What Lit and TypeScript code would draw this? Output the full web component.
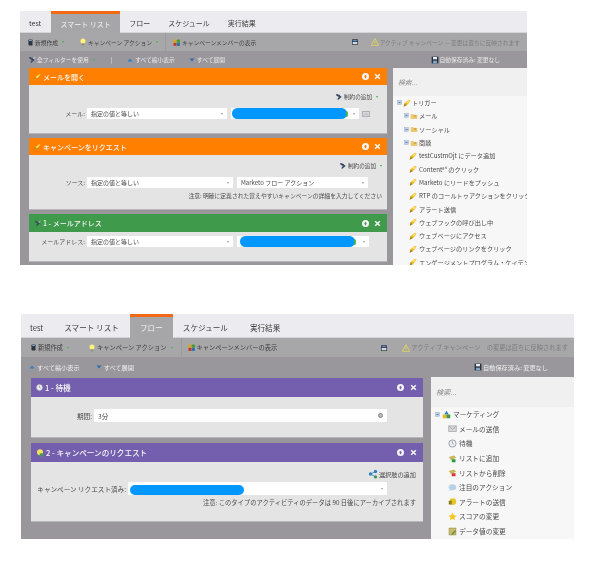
import { LitElement, html, css, svg } from "lit";
import { customElement } from "lit/decorators.js";

const I = (w: number, body: unknown) => html`<svg class="ic" width=${w} height=${w} viewBox="0 0 12 12">${body}</svg>`;
const icons: Record<string, (w?: number) => unknown> = {
  bolt: (w = 8) => I(w, svg`<path d="M1 11.5 L2.5 6.5 L8.5 1 L11.5 2.5 L6.5 8.5 Z" fill="#f5b81f"/><path d="M1 11.5 L2.5 6.5 L5.5 9.5 Z" fill="#9c8a2a"/><path d="M5 5 L8.5 2 L10.5 3 L7 6.5 Z" fill="#ffe27a"/>`),
  titleBolt: (w = 7) => I(w, svg`<path d="M1 11 L3 7 L9 2 L11 3 L6 8 Z" fill="#ffe45c"/><path d="M1 11 L3 7 L5 9 Z" fill="#6f8f2a"/>`),
  wrench: (w = 8) => I(w, svg`<path d="M2 1 L7 3 L10 6 L4 11 L4 8 L6 6 L2 4 Z" fill="#3d4a66"/><path d="M8 4 L11 2" stroke="#eee" stroke-width="1.2"/>`),
  bulb: (w = 8) => I(w, svg`<circle cx="6" cy="4.6" r="3.8" fill="#fff27a"/><rect x="4.4" y="8.4" width="3.2" height="2.6" fill="#8a8a70"/>`),
  doc: (w = 7) => I(w, svg`<rect x="2.5" y="1" width="7" height="10" rx="1" fill="#2e3540"/><rect x="3.5" y="1.5" width="5" height="2" fill="#7fa0c0"/>`),
  members: (w = 9) => I(w, svg`<circle cx="4" cy="4" r="2.5" fill="#d9a520"/><circle cx="8.5" cy="4" r="2.5" fill="#4d9a3d"/><rect x="2" y="6.5" width="4" height="4" fill="#c0392b"/><rect x="6.5" y="6.5" width="4" height="4" fill="#2d6fb0"/>`),
  up: (w = 6) => I(w, svg`<path d="M1 9 L6 3 L11 9 Z" fill="#2d82c4"/>`),
  down: (w = 6) => I(w, svg`<path d="M1 3 L11 3 L6 9 Z" fill="#2d6fb0"/>`),
  save: (w = 8) => I(w, svg`<rect x="1" y="1" width="10" height="10" fill="#26303c"/><rect x="3" y="1.5" width="6" height="3.5" fill="#e6edf5"/><rect x="3" y="7" width="6" height="4" fill="#7da3c9"/>`),
  cal: (w = 8) => I(w, svg`<rect x="1.5" y="2" width="9" height="8.5" rx="1" fill="#2e3540"/><rect x="2.5" y="3.2" width="7" height="1.6" fill="#5f9bd0"/><rect x="2.5" y="6" width="7" height="3.4" fill="#d5d8dc"/>`),
  warn: (w = 8) => I(w, svg`<path d="M6 1 L11.5 11 L.5 11 Z" fill="none" stroke="#e8d94f" stroke-width="1.2"/><rect x="5.4" y="4.5" width="1.2" height="3.6" fill="#e8d94f"/>`),
  toggle: (w = 5) => I(w, svg`<rect x="1.5" y="1.5" width="9" height="9" fill="#bcd0ea" stroke="#8aa0c0"/><rect x="3.5" y="5.2" width="5" height="1.6" fill="#44608a"/>`),
  folder: (w = 8) => I(w, svg`<path d="M1 3 L5 3 L6 4.5 L11 4.5 L11 10.5 L1 10.5 Z" fill="#eecb72"/><circle cx="7.5" cy="6" r="2" fill="#d2ab55"/>`),
  market: (w = 9) => I(w, svg`<path d="M6 1 L9 6 L3 6 Z" fill="#2f7fc1"/><rect x="1" y="6" width="5" height="5" fill="#e8b920"/><rect x="6" y="6" width="5" height="5" fill="#3f9a4b"/>`),
  mail: (w = 9) => I(w, svg`<rect x="1" y="2.5" width="10" height="7.5" fill="#d8d8da" stroke="#a5a5a8"/><path d="M1 3 L6 7 L11 3" fill="none" stroke="#9a9a9e"/>`),
  clock: (w = 9) => I(w, svg`<circle cx="6" cy="6" r="4.8" fill="#eef0f4" stroke="#9098a8" stroke-width="1.2"/><path d="M6 3 V6 L8 7" fill="none" stroke="#9098a8"/>`),
  addList: (w = 9) => I(w, svg`<path d="M1 4 L8 2 L11 5 L4 8 Z" fill="#c9b65a"/><rect x="5" y="7" width="5" height="4" fill="#2d9a35"/>`),
  delList: (w = 9) => I(w, svg`<path d="M1 4 L8 2 L11 5 L4 8 Z" fill="#c9b65a"/><rect x="5" y="7" width="5" height="4" fill="#d33"/>`),
  bubble: (w = 9) => I(w, svg`<ellipse cx="6" cy="5.5" rx="5" ry="4" fill="#b5d2e8"/><path d="M3 8 L2 11 L6 9 Z" fill="#b5d2e8"/>`),
  alert: (w = 9) => I(w, svg`<ellipse cx="6.5" cy="6" rx="4.5" ry="4.5" fill="#e2c62a"/><rect x="1" y="5" width="4" height="5" fill="#8f7f20"/>`),
  star: (w = 9) => I(w, svg`<path d="M6 .8 L7.6 4.4 L11.4 4.8 L8.5 7.3 L9.4 11 L6 9 L2.6 11 L3.5 7.3 L.6 4.8 L4.4 4.4 Z" fill="#f5c518"/>`),
  data: (w = 9) => I(w, svg`<rect x="1.5" y="1.5" width="9" height="9" fill="#cdbb6a" stroke="#9f9450"/><path d="M5 10 L10 5" stroke="#4d8a3d" stroke-width="1.5"/>`),
  waitT: (w = 7) => I(w, svg`<circle cx="6" cy="6" r="5" fill="#eee" stroke="#bbb"/><path d="M6 3 V6 L8 7" fill="none" stroke="#777"/>`),
  reqT: (w = 8) => I(w, svg`<circle cx="6" cy="5" r="4.5" fill="#f4e25a"/><rect x="5.5" y="6.5" width="5" height="5" fill="#3f9a4b"/>`),
  choice: (w = 10) => I(w, svg`<circle cx="3" cy="6" r="2" fill="#2d82c4"/><circle cx="9" cy="3" r="2" fill="#2d82c4"/><circle cx="9" cy="9.5" r="2" fill="#3f9a4b"/><path d="M3 6 L9 3 M3 6 L9 9.5" stroke="#2d82c4"/>`),
  picker: (w = 8) => I(w, svg`<rect x="1" y="2" width="10" height="8" fill="#d8d8da" stroke="#9a9a9e"/><path d="M3 8 L6 5 L9 8" fill="none" stroke="#8f9fb0"/>`),
  info: (w = 7) => I(w, svg`<circle cx="6" cy="6" r="6" fill="#f6f6f6"/><path d="M3.2 6 L6 3 L8.8 6 H7.2 V9 H4.8 V6 Z" fill="currentColor"/>`),
  close: (w = 7) => I(w, svg`<path d="M2 2 L10 10 M10 2 L2 10" stroke="#f6f6f6" stroke-width="2.6"/>`),
};

const tabs = ["スマート リスト", "フロー", "スケジュール", "実行結果"];
const tree1: [number, string, string][] = [
  [0, "bolt", "トリガー"], [1, "folder", "メール"], [1, "folder", "ソーシャル"], [1, "folder", "商談"],
  [2, "bolt", "testCustmOjt にデータ追加"], [2, "bolt", "Content⁸⁴ のクリック"], [2, "bolt", "Marketo にリードをプッシュ"],
  [2, "bolt", "RTP のコールトゥアクションをクリック"], [2, "bolt", "アラート送信"], [2, "bolt", "ウェブフックの呼び出し中"],
  [2, "bolt", "ウェブページにアクセス"], [2, "bolt", "ウェブページのリンクをクリック"], [2, "bolt", "エンゲージメントプログラム・ケイデンス"],
];
const tree2: [number, string, string][] = [
  [0, "market", "マーケティング"], [2, "mail", "メールの送信"], [2, "clock", "待機"], [2, "addList", "リストに追加"],
  [2, "delList", "リストから削除"], [2, "bubble", "注目のアクション"], [2, "alert", "アラートの送信"], [2, "star", "スコアの変更"], [2, "data", "データ値の変更"],
];

@customElement("app-root")
export class AppRoot extends LitElement {
  static styles = css`
    :host { display: block; width: 605px; height: 571px; background: #fff; overflow: hidden;
      font-family: "Noto Sans CJK JP", "Open Sans", sans-serif; color: #444; }
    .page { display: flex; flex-direction: column; padding: 11px 0 0 20px; }
    .screen { display: flex; flex-direction: column; overflow: hidden; background: #99979b; filter: blur(0.35px); }
    .s1 { width: 507px; height: 254px; }
    .s2 { width: 553px; height: 225px; margin: 49px 0 0 1px; }
    .ic { display: block; flex: none; }

    .tabs { display: flex; align-items: stretch; background: #ececf0; border-bottom: 1px solid #d4d4d8; box-sizing: border-box; }
    .s1 .tabs { height: 22px; font-size: 7px; }
    .s2 .tabs { height: 24px; font-size: 7.6px; }
    .tab { display: flex; align-items: center; justify-content: center; color: #3c3c3c; box-sizing: border-box; border-top: 3px solid transparent; padding-bottom: 1px; white-space: nowrap; }
    .tab.on { background: #a6a6a9; color: #f4f4f4; border-top-color: #f26a14; margin-bottom: -1px; }
    .s1 .tab { padding: 0 9px; }
    .s1 .tab.t0 { margin-right: 1px; }
    .s1 .tab.t1 { width: 69px; padding: 0; }
    .s2 .tab { padding: 0 8px; }
    .s2 .tab.t0 { padding: 0 13px 0 9px; }
    .s2 .tab.t1 { padding: 0 11px 0 8px; }
    .s2 .tab.t2 { width: 43px; padding: 0; }
    .s2 .tab.t3 { padding: 0 11px 0 10px; }
    .s2 .tab.t4 { padding: 0 11px; }

    .bar { display: flex; align-items: center; white-space: nowrap; color: #3e3e3e; }
    .s1 .bar.one { height: 18px; background: #a7a7aa; font-size: 5.75px; padding: 0 7px 0 7px; }
    .s2 .bar.one { height: 19px; background: #a7a7aa; font-size: 6.25px; padding: 0 6px 0 9px; }
    .s1 .bar.two { height: 17px; background: #99979b; color: #e8e8e8; font-size: 5.75px; padding: 0 10px 0 8px; }
    .s2 .bar.two { height: 20px; background: #99979b; color: #ededed; font-size: 6.2px; padding: 0 10px 0 8px; }
    .it { display: flex; align-items: center; gap: 1px; }
    .it.lg { gap: 2px; }
    .dot { width: 0; height: 0; border-left: 1.5px solid transparent; border-right: 1.5px solid transparent; border-top: 2.5px solid #39b54a; margin-left: 3px; }
    .sep { width: 1px; align-self: stretch; background: #9b9b9e; }
    .grow { flex: 1; }
    .s1 .g-act { margin-left: 15px; }
    .s1 .g-sep { margin: 0 6px 0 7px; }
    .s2 .g-act { margin-left: 19px; }
    .s2 .g-sep { margin: 0 5px 0 8px; }
    .s1 .g-warn { margin-left: 12px; }
    .s2 .g-warn { margin-left: 14px; }
    .gray-warn { color: #7c7c80; }
    .s1 .g-pipe { margin: 0 15px 0 16px; color: #e8e8e8; }
    .s1 .g-exp { margin-left: 14px; }
    .s2 .g-exp { margin-left: 16px; }
    .right-save1 { margin-right: 17px; }
    .right-save2 { margin-right: 16px; }

    .main { flex: 1; display: flex; min-height: 0; }
    .flow { flex: 1; display: flex; flex-direction: column; min-width: 0; }
    .s1 .flow { padding: 0 6px 0 9px; gap: 4px; }
    .s2 .flow { padding: 1px 8px 0 10px; gap: 5px; }
    .card { background: #e4e4e4; border-bottom: 1px solid #b8b8ba; flex: none; display: flex; flex-direction: column; }
    .head { display: flex; align-items: center; color: #f6f6f6; font-weight: 500; padding: 0 6px 0 5px; gap: 2px; flex: none; box-sizing: border-box; }
    .orange { background: #ff8000; color: #ff8000; }
    .green { background: #3f9a4b; color: #3f9a4b; }
    .purple { background: #735fae; color: #735fae; }
    .title { flex: 1; white-space: nowrap; color: #f6f6f6; }
    .ctl { display: flex; align-items: center; gap: 5px; }

    .s1 .head { height: 17px; font-size: 7px; }
    .s1 .c3 .head { height: 18px; }
    .s2 .head { height: 19px; font-size: 7.6px; }
    .s2 .ctl { gap: 6px; }
    .body { position: relative; display: flex; flex-direction: column; font-size: 6px; color: #4a4a4a; white-space: nowrap; box-sizing: border-box; }
    .add { display: flex; align-items: center; justify-content: flex-end; gap: 1px; font-size: 5.6px; height: 8px; }
    .row { display: flex; align-items: stretch; }
    .lab { display: flex; align-items: center; justify-content: flex-end; flex: none; padding-right: 2px; box-sizing: border-box; }
    .sel { background: #fff; display: flex; align-items: center; position: relative; box-sizing: border-box; padding-left: 4px; flex: none; }
    .sel .car { position: absolute; right: 4px; top: 50%; margin-top: -1px; width: 0; height: 0; border-left: 1.5px solid transparent; border-right: 1.5px solid transparent; border-top: 2px solid #999; }
    .pill { background: #0098ff; border-radius: 6px; height: 100%; }
    .sel.p { padding: 0 0 0 1px; }
    .note { font-size: 5.8px; text-align: right; }
    .greenbit { width: 2px; height: 6px; background: #45b649; border-radius: 0 3px 3px 0; margin-left: -1px; }
    .clear { position: absolute; right: 4px; top: 50%; margin-top: -2.5px; width: 5px; height: 5px; border: 1px solid #888; background: #bbb; border-radius: 50%; box-sizing: border-box; }

    .c1 .body { height: 48px; padding: 8px 9px 0 0; }
    .c1 .row { height: 11px; margin-top: 7px; }
    .c1 .lab, .c2 .lab, .c3 .lab { width: 58px; }
    .c1 .a { width: 140px; }
    .c1 .b { width: 128px; margin-left: 4px; padding-right: 11px; }
    .c1 .after { margin-left: 3px; align-self: center; }
    .c2 .body { height: 54px; padding: 7px 5px 0 0; }
    .c2 .row { height: 11px; margin-top: 7px; }
    .c2 .a { width: 146px; }
    .c2 .b { width: 131px; margin-left: 4px; }
    .c2 .note { margin-top: 3px; }
    .c3 .body { height: 29px; padding-top: 4px; }
    .c3 .row { height: 11px; }
    .c3 .a { width: 146px; }
    .c3 .b { width: 132px; margin-left: 4px; padding: 0 13px 0 3px; }
    .w1 .body { height: 40px; padding-top: 12px; font-size: 6.6px; }
    .w1 .row { height: 13px; }
    .w1 .lab { width: 63px; }
    .w1 .a { width: 293px; }
    .w2 .body { height: 59px; padding: 8px 7px 0 0; font-size: 6.6px; }
    .w2 .add { font-size: 6.2px; }
    .w2 .row { height: 13px; margin-top: 4px; }
    .w2 .lab { width: 97px; }
    .w2 .a { width: 259px; padding: 3px 0 0 2px; }
    .w2 .pill { width: 114px; height: 10px; }
    .w2 .note { margin-top: 3px; font-size: 6.3px; }

    .side { flex: none; background: #f7f7f7; display: flex; flex-direction: column; overflow: hidden; }
    .s1 .side { width: 134px; }
    .s2 .side { width: 143px; }
    .search { flex: none; background: #f0f0f1; color: #8a8a8a; font-style: italic; display: flex; align-items: center; padding-left: 5px; }
    .s1 .search { height: 28px; font-size: 6.8px; }
    .s2 .search { height: 30px; font-size: 7.2px; }
    .tree { white-space: nowrap; color: #4a4a4a; }
    .s1 .tree { font-size: 6.2px; }
    .s2 .tree { font-size: 6.7px; }
    .node { display: flex; align-items: center; gap: 1px; }
    .s1 .node { height: 13.3px; }
    .s2 .node { height: 14.6px; }
    .s1 .l0 { padding-left: 4px; } .s1 .l1 { padding-left: 11px; } .s1 .l2 { padding-left: 16px; }
    .s2 .l0 { padding-left: 4px; } .s2 .l2 { padding-left: 17px; }
    .s2 .node .ic { margin-right: 1px; }
    .s1 .l2 .ic { margin-right: 1px; }
  `;

  private head(color: string, icon: unknown, title: string) {
    return html`<div class="head ${color}">${icon}<span class="title">${title}</span>
      <span class="ctl">${icons.info()}${icons.close()}</span></div>`;
  }

  private tabsRow(active: number) {
    return html`<div class="tabs">${["test", ...tabs].map((t, i) =>
      html`<div class="tab t${i} ${i === active ? "on" : ""}">${t}</div>`)}</div>`;
  }

  private tree(rows: [number, string, string][]) {
    return html`<div class="tree">${rows.map(([l, ic, t]) => html`<div class="node l${l}">
      ${l < 2 ? icons.toggle() : ""}${icons[ic]()}<span>${t}</span></div>`)}</div>`;
  }

  private toolbar(sep2: string) {
    return html`<div class="bar one">
      <span class="it">${icons.doc()}新規作成<span class="dot"></span></span>
      <span class="it g-act">${icons.bulb()}キャンペーン アクション<span class="dot"></span></span>
      <span class="sep g-sep"></span>
      <span class="it">${icons.members()}キャンペーンメンバーの表示</span>
      <span class="grow"></span>
      ${icons.cal()}
      <span class="it g-warn gray-warn">${icons.warn()}${sep2}</span>
    </div>`;
  }

  render() {
    return html`<div class="page">
      <section class="screen s1">
        ${this.tabsRow(1)}
        ${this.toolbar("アクティブ キャンペーン — 変更は直ちに反映されます")}
        <div class="bar two">
          <span class="it">${icons.wrench()}全フィルターを使用<span class="dot"></span></span>
          <span class="g-pipe">|</span>
          <span class="it lg">${icons.up()}すべて縮小表示</span>
          <span class="it lg g-exp">${icons.down()}すべて展開</span>
          <span class="grow"></span>
          <span class="it right-save1">${icons.save()}自動保存済み: 変更なし</span>
        </div>
        <div class="main">
          <div class="flow">
            <div class="card c1">
              ${this.head("orange", icons.titleBolt(), "メールを開く")}
              <div class="body">
                <div class="add">${icons.wrench()}制約の追加<span class="dot"></span></div>
                <div class="row"><span class="lab">メール:</span>
                  <span class="sel a">指定の値と等しい<span class="car"></span></span>
                  <span class="sel b p"><span class="pill" style="width:116px"></span><span class="greenbit"></span><span class="car"></span></span>
                  <span class="after">${icons.picker()}</span>
                </div>
              </div>
            </div>
            <div class="card c2">
              ${this.head("orange", icons.titleBolt(), "キャンペーンをリクエスト")}
              <div class="body">
                <div class="add">${icons.wrench()}制約の追加<span class="dot"></span></div>
                <div class="row"><span class="lab">ソース:</span>
                  <span class="sel a">指定の値と等しい<span class="car"></span></span>
                  <span class="sel b">Marketo フロー アクション<span class="car"></span></span>
                </div>
                <div class="note">注意: 明確に定義された覚えやすいキャンペーンの詳細を入力してください</div>
              </div>
            </div>
            <div class="card c3">
              ${this.head("green", icons.wrench(7), "1 - メールアドレス")}
              <div class="body">
                <div class="row"><span class="lab">メールアドレス:</span>
                  <span class="sel a">指定の値と等しい<span class="car"></span></span>
                  <span class="sel b p"><span class="pill" style="width:115px"></span><span class="greenbit"></span><span class="car"></span></span>
                </div>
              </div>
            </div>
          </div>
          <aside class="side"><div class="search">検索...</div>${this.tree(tree1)}</aside>
        </div>
      </section>

      <section class="screen s2">
        ${this.tabsRow(2)}
        ${this.toolbar("アクティブ キャンペーン　の変更は直ちに反映されます")}
        <div class="bar two">
          <span class="it lg">${icons.up()}すべて縮小表示</span>
          <span class="it lg g-exp">${icons.down()}すべて展開</span>
          <span class="grow"></span>
          <span class="it right-save2">${icons.save()}自動保存済み: 変更なし</span>
        </div>
        <div class="main">
          <div class="flow">
            <div class="card w1">
              ${this.head("purple", icons.waitT(), "1 - 待機")}
              <div class="body">
                <div class="row"><span class="lab">期間:</span>
                  <span class="sel a">3分<span class="clear"></span></span>
                </div>
              </div>
            </div>
            <div class="card w2">
              ${this.head("purple", icons.reqT(), "2 - キャンペーンのリクエスト")}
              <div class="body">
                <div class="add">${icons.choice()}選択肢の追加</div>
                <div class="row"><span class="lab">キャンペーン リクエスト済み:</span>
                  <span class="sel a"><span class="pill"></span><span class="car"></span></span>
                </div>
                <div class="note">注意: このタイプのアクティビティのデータは 90 日後にアーカイブされます</div>
              </div>
            </div>
          </div>
          <aside class="side"><div class="search">検索...</div>${this.tree(tree2)}</aside>
        </div>
      </section>
    </div>`;
  }
}
